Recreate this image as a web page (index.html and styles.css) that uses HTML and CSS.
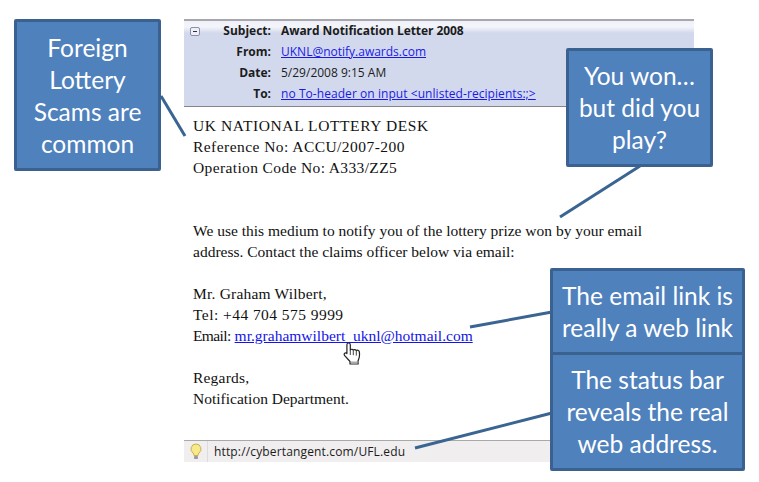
FILE: index.html
```
<!DOCTYPE html>
<html lang="en">
<head>
<meta charset="utf-8">
<title>Foreign Lottery Scam</title>
<link rel="stylesheet" href="styles.css">
</head>
<body>
<main class="slide">
  <section class="email">
    <header class="mail-head">
      <span class="collapse"></span>
      <dl class="fields">
        <dt>Subject:</dt><dd class="subject">Award Notification Letter 2008</dd>
        <dt>From:</dt><dd><a href="#">UKNL@notify.awards.com</a></dd>
        <dt>Date:</dt><dd>5/29/2008 9:15 AM</dd>
        <dt>To:</dt><dd><a class="to-link" href="#">no To-header on input &lt;unlisted-recipients:;&gt;</a></dd>
      </dl>
    </header>
    <div class="mail-body">
      <p><span class="track-6">UK NATIONAL LOTTERY DESK</span><br><span class="track-45">Reference No: ACCU/2007-200</span><br><span class="track-35">Operation Code No: A333/ZZ5</span></p>
      <p class="gap-2">We use this medium to notify you of the lottery prize won by your email<br>address. Contact the claims officer below via email:</p>
      <p><span class="track-2">Mr. Graham Wilbert,</span><br><span class="track-45">Tel: +44 704 575 9999</span><br><span class="label">Email:</span> <a href="#">mr.grahamwilbert_uknl@hotmail.com</a></p>
      <p><span class="track-2">Regards,</span><br>Notification Department.</p>
    </div>
    <footer class="status">
      <span class="bulb-cell">
        <svg class="bulb" width="12" height="17" viewBox="0 0 12 17"><path d="M6 1a5 5 0 0 0-3 9c.7.6 1 1.300 1 2.500h4c0-1.200.3-1.900 1-2.500a5 5 0 0 0-3-9z" fill="#f8ea8c" stroke="#c9b04e"/><rect x="4" y="13" width="4" height="3" rx="1" fill="#9a9a98"/></svg>
      </span>
      <span class="url">http://cybertangent.com/UFL.edu</span>
    </footer>
  </section>

  <svg class="connectors" width="759" height="482" viewBox="0 0 759 482">
    <line x1="161" y1="96" x2="185" y2="136"/>
    <line x1="640" y1="166" x2="560" y2="217"/>
    <line x1="470" y1="327" x2="552" y2="312"/>
    <line x1="415" y1="448" x2="552" y2="413"/>
  </svg>

  <svg class="hand" width="20" height="23" viewBox="0 0 20 23">
    <path d="M5.500 1c1.100 0 1.800.8 1.800 1.800V8c.6-1 2.600-1 3 .2.700-.9 2.600-.8 3 .4.800-.7 2.800-.4 3 1.100.4 2.600.3 5-.5 7l-.8 2.300.1 3H7v-2.500L1.700 13.600C.3 12 2 10.200 3.600 11.200l.3.300V2.800C3.900 1.800 4.500 1 5.500 1z" fill="#fff" stroke="#222" stroke-width="1.200" stroke-linejoin="round"/>
    <path d="M7.300 8v5M10.300 8.200v5M13.300 8.600v5" stroke="#444" stroke-width="1" fill="none"/>
    <path d="M8 20.500h6.500" stroke="#aaa" stroke-width="2"/>
  </svg>

  <div class="note note-foreign">Foreign<br>Lottery<br>Scams are<br>common</div>
  <div class="note note-won">You won…<br>but did you<br>play?</div>
  <div class="note note-link">The email link is<br>really a web link</div>
  <div class="note note-status">The status bar<br>reveals the real<br>web address.</div>
</main>
</body>
</html>
```
FILE: styles.css
```
* { box-sizing: border-box; }
html, body { margin: 0; padding: 0; background: #fff; }
.slide { position: relative; width: 759px; height: 482px; overflow: hidden; padding: 19px 0 0 184px; }
.email { width: 510px; }
.mail-head {
  display: flex;
  height: 88px;
  padding: 0 0 0 6px;
  background: linear-gradient(#eef0f8 0, #f3f4fa 3px, #f3f4fa 6px, #d3d9ec 12px, #d3d9ec 100%);
  border-top: 2px solid #a7a7ad;
  border-bottom: 1px solid #85858a;
  font: 12px/21px "Open Sans", sans-serif;
  color: #1c1c1c;
}
.collapse {
  position: relative;
  flex: none;
  width: 10px;
  height: 9px;
  margin-top: 6px;
  border: 1px solid #8c8caf;
  border-radius: 2px;
  background: #eeeef6;
}
.collapse::after { content: ""; position: absolute; left: 2px; top: 3px; width: 4px; height: 1px; background: #333; }
.fields { display: grid; grid-template-columns: 71px 1fr; grid-auto-rows: 21px; column-gap: 10px; margin: -1px 0 0; }
.fields dt { font-weight: 700; text-align: right; }
.fields dd { margin: 0; white-space: nowrap; }
.fields .subject { font-weight: 700; letter-spacing: -.06px; }
.fields a { color: #1a1ae6; }
.fields .to-link { letter-spacing: .06px; }
.mail-body {
  height: 333px;
  padding: 8px 0 0 9px;
  font: 15.500px/21px "Liberation Serif", serif;
  color: #111;
}
.mail-body p { margin: 0 0 21px; white-space: nowrap; }
.mail-body .gap-2 { margin-top: 42px; }
.mail-body a { color: #1414e8; }
.track-6 { letter-spacing: .6px; }
.track-45 { letter-spacing: .45px; }
.track-35 { letter-spacing: .37px; }
.track-2 { letter-spacing: .2px; }
.label { letter-spacing: -.6px; }
.status {
  display: flex;
  align-items: center;
  height: 22px;
  width: 367px;
  background: #f0eeee;
  border-top: 1px solid #a9a9a9;
  font: 12px "Open Sans", sans-serif;
  color: #1c1c1c;
}
.bulb-cell { display: flex; justify-content: center; align-items: center; width: 24px; height: 100%; border-right: 1px solid #dcdcdc; }
.url { margin-left: 6px; letter-spacing: .15px; }
.connectors { position: absolute; left: 0; top: 0; }
.connectors line { stroke: #3a6491; stroke-width: 3; }
.hand { position: absolute; left: 343px; top: 342px; }
.note {
  position: absolute;
  display: flex;
  align-items: center;
  justify-content: center;
  padding-top: 1px;
  text-align: center;
  background: #4f81bd;
  border: 3px solid #3a6190;
  border-radius: 2px;
  color: #fff;
  font: 24.500px/32px Lato, sans-serif;
}
.note-foreign { left: 14px; top: 19px; width: 147px; height: 152px; }
.note-won { left: 566px; top: 48px; width: 147px; height: 119px; }
.note-link { left: 550px; top: 268px; width: 195px; height: 87px; }
.note-status { left: 550px; top: 352px; width: 195px; height: 119px; }
```
